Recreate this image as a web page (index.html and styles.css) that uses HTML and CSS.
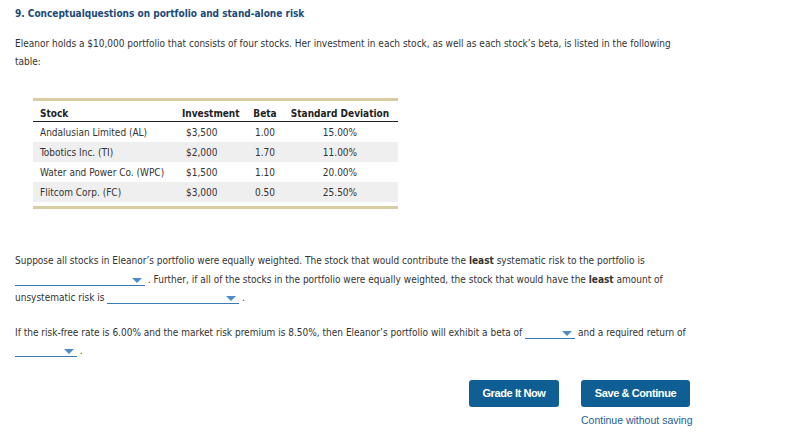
FILE: index.html
```html
<!DOCTYPE html>
<html>
<head>
<meta charset="utf-8">
<link rel="stylesheet" href="styles.css">
</head>
<body>
<div class="page">
  <h1 class="title">9. Conceptualquestions on portfolio and stand-alone risk</h1>
  <p class="intro">Eleanor holds a $10,000 portfolio that consists of four stocks. Her investment in each stock, as well as each stock’s beta, is listed in the following table:</p>

  <div class="table-wrap">
    <table class="stocks">
      <colgroup>
        <col class="w-stock"><col class="w-inv"><col class="w-beta"><col class="w-sd">
      </colgroup>
      <thead>
        <tr>
          <th class="c-stock">Stock</th>
          <th class="c-inv">Investment</th>
          <th class="c-beta">Beta</th>
          <th class="c-sd">Standard Deviation</th>
        </tr>
      </thead>
      <tbody>
        <tr><td class="c-stock">Andalusian Limited (AL)</td><td class="c-inv">$3,500</td><td class="c-beta">1.00</td><td class="c-sd">15.00%</td></tr>
        <tr class="alt"><td class="c-stock">Tobotics Inc. (TI)</td><td class="c-inv">$2,000</td><td class="c-beta">1.70</td><td class="c-sd">11.00%</td></tr>
        <tr><td class="c-stock">Water and Power Co. (WPC)</td><td class="c-inv">$1,500</td><td class="c-beta">1.10</td><td class="c-sd">20.00%</td></tr>
        <tr class="alt"><td class="c-stock">Flitcom Corp. (FC)</td><td class="c-inv">$3,000</td><td class="c-beta">0.50</td><td class="c-sd">25.50%</td></tr>
      </tbody>
    </table>
  </div>

  <p class="q q1">Suppose all stocks in Eleanor’s portfolio were equally weighted. The stock that would contribute the <b>least</b> systematic risk to the portfolio is<br><span class="dd dd-a"><span class="arrow"></span></span> . Further, if all of the stocks in the portfolio were equally weighted, the stock that would have the <b>least</b> amount of<br>unsystematic risk is <span class="dd dd-b"><span class="arrow"></span></span> .</p>

  <p class="q q2">If the risk-free rate is 6.00% and the market risk premium is 8.50%, then Eleanor’s portfolio will exhibit a beta of <span class="dd dd-c"><span class="arrow"></span></span> and a required return of<br><span class="dd dd-d"><span class="arrow"></span></span> .</p>

  <div class="actions">
    <button class="btn btn-grade">Grade It Now</button>
    <div class="save-group">
      <button class="btn btn-save">Save &amp; Continue</button>
      <a class="link" href="#">Continue without saving</a>
    </div>
  </div>
</div>
</body>
</html>
```

FILE: styles.css
```css
html, body {
  margin: 0;
  padding: 0;
  background: #ffffff;
}
body {
  font-family: "DejaVu Sans Condensed", "DejaVu Sans", sans-serif;
  font-size: 10px;
  color: #333333;
}
.page {
  padding: 8px 15px 0 15px;
  width: 720px;
}
.title {
  margin: 0;
  font-size: 10px;
  font-weight: bold;
  color: #1b4a78;
  line-height: 12px;
}
.intro {
  margin: 15px 0 0 0;
  line-height: 18px;
  width: 672px;
}
.table-wrap {
  margin: 27px 0 0 18px;
  width: 365px;
  border-top: 3px solid #d9cca2;
  border-bottom: 3px solid #d9cca2;
  padding: 0 0 4px 0;
}
.stocks {
  width: 365px;
  border-collapse: collapse;
  table-layout: fixed;
}
.w-stock { width: 149px; }
.w-inv { width: 66px; }
.w-beta { width: 34px; }
.w-sd { width: 116px; }
.stocks th {
  font-weight: bold;
  color: #222222;
  text-align: left;
  height: 19px;
  padding: 0 0 1px 0;
  line-height: 12px;
  border-bottom: 1px solid #222222;
  vertical-align: bottom;
  white-space: nowrap;
}
.stocks td {
  height: 15px;
  padding: 5px 0 0 0;
  line-height: 12px;
  vertical-align: top;
  white-space: nowrap;
}
.stocks .alt td {
  background: #efefef;
}
.stocks .c-stock { padding-left: 7px; }
.stocks td.c-inv { text-align: left; padding-left: 4px; }
.stocks td.c-beta, .stocks td.c-sd { text-align: center; }
.stocks th.c-inv { text-align: left; }
.stocks th.c-beta { text-align: center; }
.stocks th.c-sd { text-align: center; }

.q {
  margin: 0;
  line-height: 18.5px;
  width: 720px;
}
.q1 {
  margin-top: 43px;
}
.q2 {
  margin-top: 16px;
}
.dd {
  display: inline-block;
  position: relative;
  border-bottom: 1px solid #3d7ab8;
  height: 12px;
  vertical-align: -3px;
}
.dd-a { width: 130px; }
.dd-b { width: 132px; }
.dd-c { width: 50px; }
.dd-d { width: 62px; }
.arrow {
  position: absolute;
  right: 3px;
  bottom: 2px;
  width: 0;
  height: 0;
  border-left: 5px solid transparent;
  border-right: 5px solid transparent;
  border-top: 5px solid #4d8cc9;
}
.actions {
  display: flex;
  margin: 19px 0 0 454px;
  gap: 22px;
  align-items: flex-start;
}
.save-group {
  display: flex;
  flex-direction: column;
  align-items: flex-start;
}
.btn {
  font-family: "Liberation Sans", Arial, sans-serif;
  font-weight: bold;
  font-size: 11px;
  letter-spacing: -0.4px;
  color: #ffffff;
  background: #0f5f94;
  border: none;
  border-radius: 3px;
  height: 27px;
  padding: 0;
}
.btn-grade { width: 90px; }
.btn-save { width: 109px; }
.link {
  font-family: "Liberation Sans", Arial, sans-serif;
  font-size: 10.5px;
  color: #1f5d96;
  text-decoration: none;
  margin-top: 7px;
  line-height: 13px;
}
```
